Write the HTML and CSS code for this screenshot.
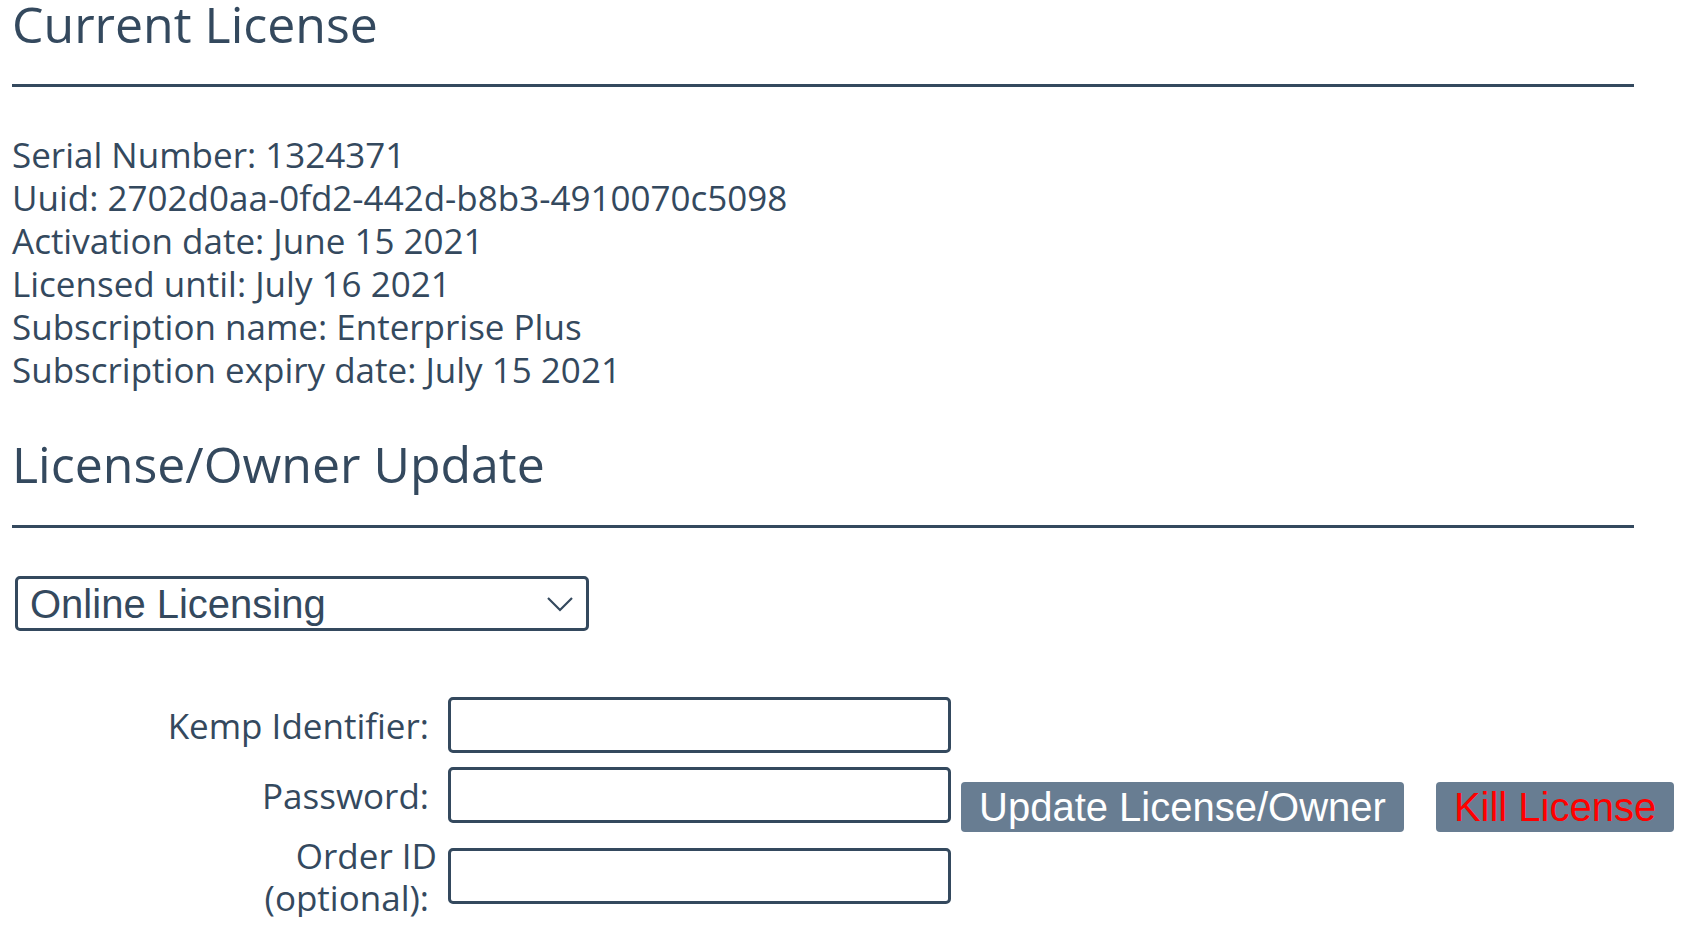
FILE: index.html
```html
<!DOCTYPE html>
<html lang="en">
<head>
<meta charset="utf-8">
<title>License</title>
<link rel="stylesheet" href="styles.css">
</head>
<body>
<div class="page">
  <h2 class="title title-first">Current License</h2>
  <div class="rule"></div>
  <div class="info">
    <div>Serial Number: 1324371</div>
    <div>Uuid: 2702d0aa-0fd2-442d-b8b3-4910070c5098</div>
    <div>Activation date: June 15 2021</div>
    <div>Licensed until: July 16 2021</div>
    <div>Subscription name: Enterprise Plus</div>
    <div>Subscription expiry date: July 15 2021</div>
  </div>
  <h2 class="title title-second">License/Owner Update</h2>
  <div class="rule"></div>
  <div class="select">
    <span class="select-text">Online Licensing</span>
    <svg class="chevron" width="26" height="15" viewBox="0 0 26 15"><path d="M1 1 L13 13 L25 1" fill="none" stroke="#34495e" stroke-width="2.2"/></svg>
  </div>
  <div class="form">
    <div class="label">Kemp Identifier:</div>
    <div class="field"><div class="input"></div></div>
    <div class="actions">
      <div class="btn">Update License/Owner</div>
      <div class="btn btn-kill">Kill License</div>
    </div>
    <div class="label">Password:</div>
    <div class="field"><div class="input"></div></div>
    <div class="label label-two"><span class="label-first">Order ID</span><br>(optional):</div>
    <div class="field field-last"><div class="input"></div></div>
  </div>
</div>
</body>
</html>
```
FILE: styles.css
```css
html, body {
  margin: 0;
  padding: 0;
  background: #ffffff;
}
body {
  font-family: "Open Sans", "Noto Sans", sans-serif;
  color: #34495e;
}
.page {
  width: 1622px;
  padding-left: 12px;
}
.title {
  margin: 0;
  font-weight: 400;
  font-size: 50px;
  line-height: 48px;
}
.title-first {
  margin-top: 0;
}
.rule {
  height: 3px;
  background: #34495e;
}
.title-first + .rule {
  margin-top: 36px;
}
.info {
  margin-top: 46px;
  font-size: 35px;
  line-height: 43px;
}
.title-second {
  margin-top: 49px;
}
.title-second + .rule {
  margin-top: 37px;
}
.select {
  margin-top: 48px;
  margin-left: 3px;
  width: 574px;
  height: 55px;
  box-sizing: border-box;
  border: 3px solid #34495e;
  border-radius: 5px;
  display: flex;
  align-items: center;
  justify-content: space-between;
  padding: 0 13px 0 12px;
  font-family: "Liberation Sans", Arial, sans-serif;
  font-size: 40px;
}
.select-text {
  line-height: 46px;
}
.chevron {
  display: block;
  margin-top: 2px;
}
.form {
  margin-top: 66px;
  display: grid;
  grid-template-columns: 420px 503px auto;
  column-gap: 16px;
  row-gap: 14px;
  font-size: 35px;
  line-height: 43px;
}
.label {
  text-align: right;
  align-self: center;
  padding-right: 3px;
  white-space: nowrap;
}
.label-two {
  line-height: 42px;
  margin-top: -6px;
  margin-bottom: -2px;
  padding-top: 4px;
}
.label-first {
  display: inline-block;
  margin-right: -8px;
}
.field {
  align-self: center;
}
.field-last {
  margin-top: -3px;
}
.input {
  height: 56px;
  box-sizing: border-box;
  border: 3px solid #34495e;
  border-radius: 5px;
  background: #fff;
}
.actions {
  grid-column: 3;
  grid-row: 1 / 4;
  align-self: center;
  display: flex;
  gap: 32px;
  margin-left: -6px;
  margin-top: -1px;
}
.btn {
  height: 50px;
  box-sizing: border-box;
  padding: 0 18px;
  background: #687d92;
  border-radius: 4px;
  color: #ffffff;
  font-family: "Liberation Sans", Arial, sans-serif;
  font-size: 40px;
  line-height: 50px;
  white-space: nowrap;
}
.btn-kill {
  color: #ff0000;
}
```
